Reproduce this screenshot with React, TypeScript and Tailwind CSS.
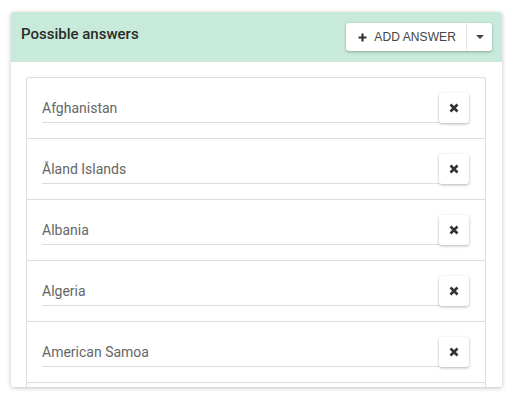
import React from 'react';

const answers = ['Afghanistan', 'Åland Islands', 'Albania', 'Algeria', 'American Samoa', 'Andorra'];

const AnswerRow: React.FC<{ value: string }> = ({ value }) => (
  <div className="h-[61px] border-b border-[#dddddd] pl-[15px] pr-[16px] pt-[15px] flex items-start">
    <input
      readOnly
      value={value}
      className="flex-1 h-[30px] border-b border-[#dddddd] bg-transparent text-[14px] text-[#666666] outline-none pt-[1px]"
    />
    <button className="w-[30px] h-[30px] rounded-[3px] bg-white shadow-[0_1px_3px_rgba(0,0,0,0.3)] flex items-center justify-center">
      <svg width="10" height="10" viewBox="0 0 10 10">
        <path d="M1.5 1.5 L8.5 8.5 M8.5 1.5 L1.5 8.5" stroke="#333" strokeWidth="2.6" strokeLinecap="butt" />
      </svg>
    </button>
  </div>
);

export default function App() {
  return (
    <div className="w-[512px] h-[404px] bg-white pt-3 pl-[11px]" style={{ fontFamily: 'Roboto, "Liberation Sans", Arial, sans-serif' }}>
      <div className="w-[491px] h-[375px] rounded-[3px] shadow-[0_1px_4px_rgba(0,0,0,0.25)] overflow-hidden flex flex-col">
        <div className="h-[50px] bg-[#c8eadb] flex items-center justify-between pl-[10px] pr-[10px]">
          <h3 className="text-[15px] font-medium text-[#2a2a2a] -mt-[6px]">Possible answers</h3>
          <div className="flex h-[28px] bg-white rounded-[3px] shadow-[0_1px_3px_rgba(0,0,0,0.3)] font-['Liberation_Sans',Arial,sans-serif]">
            <button className="flex items-center gap-[7px] pl-[12px] pr-[10px] text-[12px] text-[#444444] tracking-[0.1px]">
              <svg width="9" height="9" viewBox="0 0 9 9">
                <path d="M4.5 0.5 V8.5 M0.5 4.5 H8.5" stroke="#333" strokeWidth="2.2" />
              </svg>
              ADD ANSWER
            </button>
            <div className="w-px bg-[#e5e5e5]" />
            <button className="w-[25px] flex items-center justify-center">
              <svg width="8" height="4" viewBox="0 0 8 4">
                <path d="M0 0 H8 L4 4 Z" fill="#444" />
              </svg>
            </button>
          </div>
        </div>
        <div className="flex-1 bg-white pt-[15px] px-[15px] overflow-hidden">
          <div className="border-x border-t border-[#dddddd] rounded-t-[3px] w-[460px]">
            {answers.map((a) => (
              <AnswerRow key={a} value={a} />
            ))}
          </div>
        </div>
      </div>
    </div>
  );
}
